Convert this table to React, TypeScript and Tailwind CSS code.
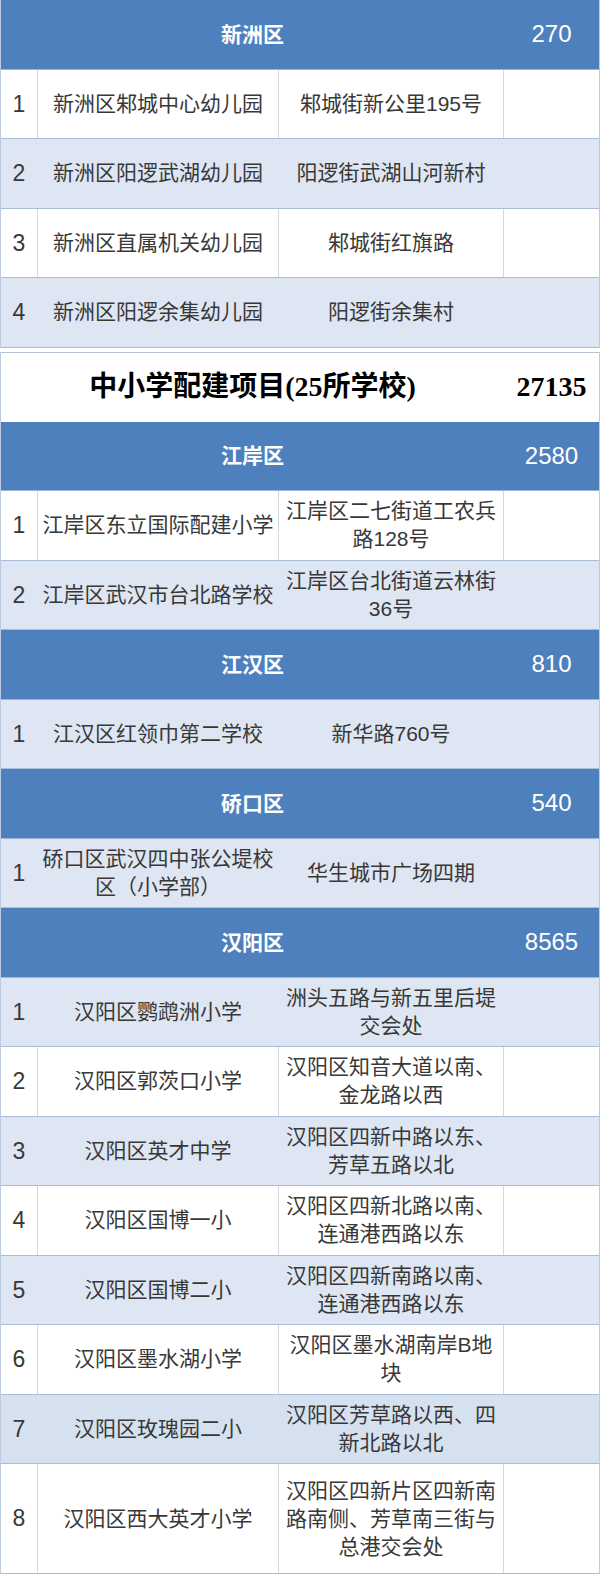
import React from "react";

type Tone = "w" | "l" | "l2";
type Item = { n: string; name: string[]; addr: string[]; tone: Tone; tall?: boolean };
type Section = { title: string; total: string; rows: Item[] };

const xinzhou: Section = {
  title: "新洲区",
  total: "270",
  rows: [
    { n: "1", name: ["新洲区邾城中心幼儿园"], addr: ["邾城街新公里195号"], tone: "w" },
    { n: "2", name: ["新洲区阳逻武湖幼儿园"], addr: ["阳逻街武湖山河新村"], tone: "l" },
    { n: "3", name: ["新洲区直属机关幼儿园"], addr: ["邾城街红旗路"], tone: "w" },
    { n: "4", name: ["新洲区阳逻余集幼儿园"], addr: ["阳逻街余集村"], tone: "l" },
  ],
};

const schools: Section[] = [
  {
    title: "江岸区",
    total: "2580",
    rows: [
      { n: "1", name: ["江岸区东立国际配建小学"], addr: ["江岸区二七街道工农兵", "路128号"], tone: "w" },
      { n: "2", name: ["江岸区武汉市台北路学校"], addr: ["江岸区台北街道云林街", "36号"], tone: "l" },
    ],
  },
  {
    title: "江汉区",
    total: "810",
    rows: [{ n: "1", name: ["江汉区红领巾第二学校"], addr: ["新华路760号"], tone: "l" }],
  },
  {
    title: "硚口区",
    total: "540",
    rows: [{ n: "1", name: ["硚口区武汉四中张公堤校", "区（小学部）"], addr: ["华生城市广场四期"], tone: "l" }],
  },
  {
    title: "汉阳区",
    total: "8565",
    rows: [
      { n: "1", name: ["汉阳区鹦鹉洲小学"], addr: ["洲头五路与新五里后堤", "交会处"], tone: "l" },
      { n: "2", name: ["汉阳区郭茨口小学"], addr: ["汉阳区知音大道以南、", "金龙路以西"], tone: "w" },
      { n: "3", name: ["汉阳区英才中学"], addr: ["汉阳区四新中路以东、", "芳草五路以北"], tone: "l" },
      { n: "4", name: ["汉阳区国博一小"], addr: ["汉阳区四新北路以南、", "连通港西路以东"], tone: "w" },
      { n: "5", name: ["汉阳区国博二小"], addr: ["汉阳区四新南路以南、", "连通港西路以东"], tone: "l" },
      { n: "6", name: ["汉阳区墨水湖小学"], addr: ["汉阳区墨水湖南岸B地", "块"], tone: "w" },
      { n: "7", name: ["汉阳区玫瑰园二小"], addr: ["汉阳区芳草路以西、四", "新北路以北"], tone: "l2" },
      {
        n: "8",
        name: ["汉阳区西大英才小学"],
        addr: ["汉阳区四新片区四新南", "路南侧、芳草南三街与", "总港交会处"],
        tone: "w",
        tall: true,
      },
    ],
  },
];

function Header({ title, total }: { title: string; total: string }) {
  return (
    <div className="grid h-[69.5px] grid-cols-[503px_1fr] border-b border-[#9db6d8] bg-[#4f80be] text-white">
      <div className="flex items-center justify-center text-[21px] font-bold">{title}</div>
      <div className="flex items-center justify-center text-[24px]">{total}</div>
    </div>
  );
}

function Lines({ lines }: { lines: string[] }) {
  return (
    <div className="text-center leading-[28px]">
      {lines.map((l) => (
        <div key={l}>{l}</div>
      ))}
    </div>
  );
}

function Row({ r }: { r: Item }) {
  const bg = r.tone === "w" ? "bg-white" : r.tone === "l2" ? "bg-[#d6e1f0]" : "bg-[#dde6f2]";
  const div = r.tone === "w" ? "border-r border-[#d4d9e1]" : "border-r border-transparent";
  return (
    <div
      className={`grid grid-cols-[37px_241px_225px_1fr] border-b border-[#a9bdd9] text-[21px] text-[#383838] ${bg} ${
        r.tall ? "h-[110px]" : "h-[69.5px]"
      }`}
    >
      <div className={`flex items-center justify-center text-[23px] ${div}`}>{r.n}</div>
      <div className={`flex items-center justify-center ${div}`}>
        <Lines lines={r.name} />
      </div>
      <div className={`flex items-center justify-center ${div}`}>
        <Lines lines={r.addr} />
      </div>
      <div />
    </div>
  );
}

export default function App() {
  return (
    <div className="min-h-[1575px] bg-white font-['Liberation_Sans','Noto_Sans_CJK_SC',sans-serif]">
      <div className="border-x border-[#bccbe0]">
        <Header title={xinzhou.title} total={xinzhou.total} />
        {xinzhou.rows.map((r) => (
          <Row key={r.n} r={r} />
        ))}
      </div>
      <div className="h-[4px]" />
      <div className="border-x border-[#bccbe0]">
        <div className="grid h-[70px] grid-cols-[503px_1fr] border-t border-[#b5c2d4] bg-white text-[28px] font-bold text-black font-['Liberation_Serif','Noto_Sans_CJK_SC',serif]">
          <div className="flex items-center justify-center">中小学配建项目(25所学校)</div>
          <div className="flex items-center justify-center">27135</div>
        </div>
        {schools.map((s) => (
          <div key={s.title}>
            <Header title={s.title} total={s.total} />
            {s.rows.map((r) => (
              <Row key={r.n} r={r} />
            ))}
          </div>
        ))}
      </div>
    </div>
  );
}
